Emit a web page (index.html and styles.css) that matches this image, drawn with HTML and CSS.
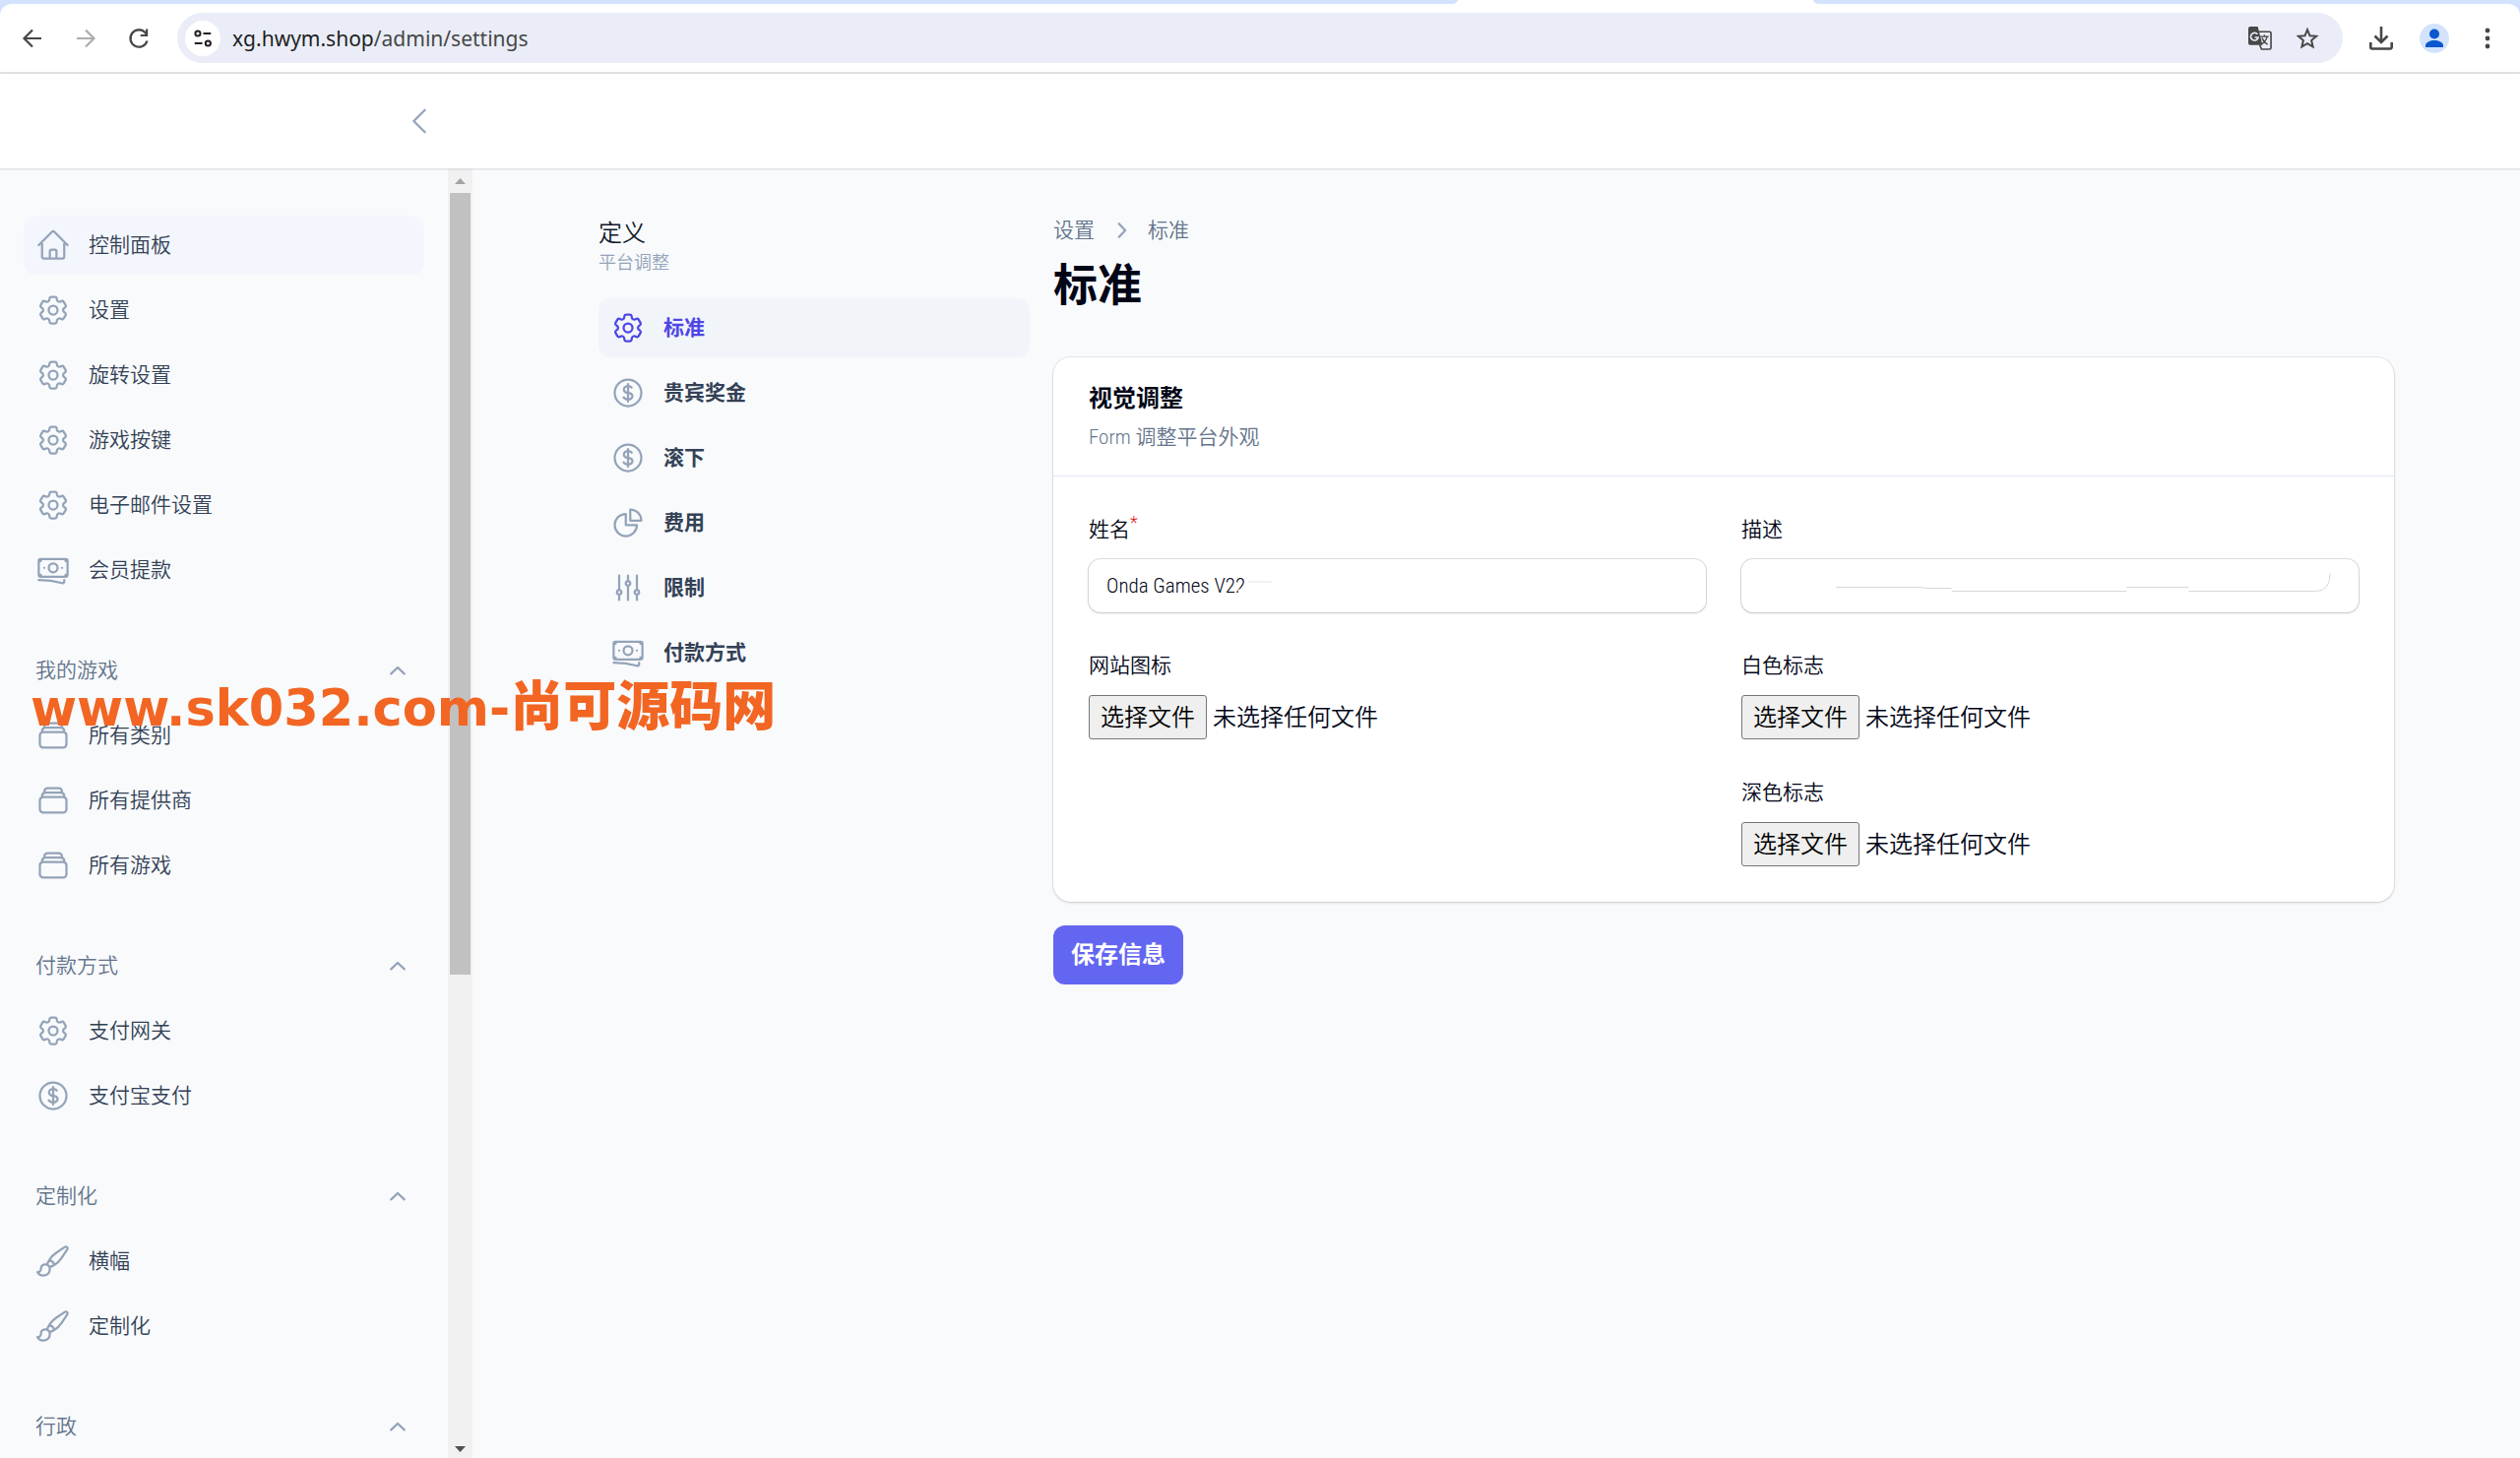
FILE: index.html
```html
<!DOCTYPE html>
<html lang="zh-CN">
<head>
<meta charset="utf-8">
<meta name="viewport" content="width=device-width, initial-scale=1">
<title>标准 - 设置</title>
<link rel="stylesheet" href="styles.css">
</head>
<body>
<svg class="sprite" aria-hidden="true">
  <symbol id="home" viewBox="0 0 24 24"><path d="M2.25 12l8.954-8.955c.44-.439 1.152-.439 1.591 0L21.75 12M4.5 9.75v10.125c0 .621.504 1.125 1.125 1.125H9.75v-4.875c0-.621.504-1.125 1.125-1.125h2.25c.621 0 1.125.504 1.125 1.125V21h4.125c.621 0 1.125-.504 1.125-1.125V9.75M8.25 21h8.25"/></symbol>
  <symbol id="cog" viewBox="0 0 24 24"><path d="M9.594 3.94c.09-.542.56-.94 1.11-.94h2.593c.55 0 1.02.398 1.11.94l.213 1.281c.063.374.313.686.645.87.074.04.147.083.22.127.324.196.72.257 1.075.124l1.217-.456a1.125 1.125 0 011.37.49l1.296 2.247a1.125 1.125 0 01-.26 1.431l-1.003.827c-.293.24-.438.613-.431.992a6.759 6.759 0 010 .255c-.007.378.138.75.43.99l1.005.828c.424.35.534.954.26 1.43l-1.298 2.247a1.125 1.125 0 01-1.369.491l-1.217-.456c-.355-.133-.75-.072-1.076.124a6.57 6.57 0 01-.22.128c-.331.183-.581.495-.644.869l-.213 1.28c-.09.543-.56.941-1.11.941h-2.594c-.55 0-1.02-.398-1.11-.94l-.213-1.281c-.062-.374-.312-.686-.644-.87a6.52 6.52 0 01-.22-.127c-.325-.196-.72-.257-1.076-.124l-1.217.456a1.125 1.125 0 01-1.369-.49l-1.297-2.247a1.125 1.125 0 01.26-1.431l1.004-.827c.292-.24.437-.613.43-.992a6.932 6.932 0 010-.255c.007-.378-.138-.75-.43-.99l-1.004-.828a1.125 1.125 0 01-.26-1.43l1.297-2.247a1.125 1.125 0 011.37-.491l1.216.456c.356.133.751.072 1.076-.124.072-.044.146-.087.22-.128.332-.183.582-.495.644-.869l.214-1.281z"/><path d="M15 12a3 3 0 11-6 0 3 3 0 016 0z"/></symbol>
  <symbol id="banknotes" viewBox="0 0 24 24"><path d="M2.25 18.75a60.07 60.07 0 0115.797 2.101c.727.198 1.453-.342 1.453-1.096V18.75M3.75 4.5v.75A.75.75 0 013 6h-.75m0 0v-.375c0-.621.504-1.125 1.125-1.125H20.25M2.25 6v9m18-10.5v.75c0 .414.336.75.75.75h.75m-1.5-1.5h.375c.621 0 1.125.504 1.125 1.125v9.75c0 .621-.504 1.125-1.125 1.125h-.375m1.5-1.5H21a.75.75 0 00-.75.75v.75m0 0H3.75m0 0h-.375a1.125 1.125 0 01-1.125-1.125V15m1.5 1.5v-.75A.75.75 0 003 15h-.75M15 10.5a3 3 0 11-6 0 3 3 0 016 0zm3 0h.008v.008H18V10.5zm-12 0h.008v.008H6V10.5z"/></symbol>
  <symbol id="dollar" viewBox="0 0 24 24"><path d="M12 6v12m-3-2.818l.879.659c1.171.879 3.07.879 4.242 0 1.172-.879 1.172-2.303 0-3.182C13.536 12.219 12.768 12 12 12c-.725 0-1.45-.22-2.003-.659-1.106-.879-1.106-2.303 0-3.182s2.9-.879 4.006 0l.415.33M21 12a9 9 0 11-18 0 9 9 0 0118 0z"/></symbol>
  <symbol id="pie" viewBox="0 0 24 24"><path d="M10.5 6a7.5 7.5 0 107.5 7.5h-7.5V6z"/><path d="M13.5 10.5H21A7.5 7.5 0 0013.5 3v7.5z"/></symbol>
  <symbol id="sliders" viewBox="0 0 24 24"><path d="M6 13.5V3.75m0 9.75a1.5 1.5 0 010 3m0-3a1.5 1.5 0 000 3m0 3.75V16.5m12-3V3.75m0 9.75a1.5 1.5 0 010 3m0-3a1.5 1.5 0 000 3m0 3.75V16.5m-6-9V3.75m0 3.75a1.5 1.5 0 010 3m0-3a1.5 1.5 0 000 3m0 9.75V10.5"/></symbol>
  <symbol id="stack" viewBox="0 0 24 24"><path d="M6 6.878V6a2.25 2.25 0 012.25-2.25h7.5A2.25 2.25 0 0118 6v.878m-12 0c.235-.083.487-.128.75-.128h10.5c.263 0 .515.045.75.128m-12 0A2.25 2.25 0 004.5 9v.878m13.5-3A2.25 2.25 0 0119.5 9v.878m0 0a2.246 2.246 0 00-.75-.128H5.25c-.263 0-.515.045-.75.128m15 0A2.25 2.25 0 0121 12v6a2.25 2.25 0 01-2.25 2.25H5.25A2.25 2.25 0 013 18v-6c0-.98.626-1.813 1.5-2.122"/></symbol>
  <symbol id="brush" viewBox="0 0 24 24"><path d="M9.53 16.122a3 3 0 00-5.78 1.128 2.25 2.25 0 01-2.4 2.245 4.5 4.5 0 008.4-2.245c0-.399-.078-.78-.22-1.128zm0 0a15.998 15.998 0 003.388-1.62m-5.043-.025a15.994 15.994 0 011.622-3.395m3.42 3.42a15.995 15.995 0 004.764-4.648l3.876-5.814a1.151 1.151 0 00-1.597-1.597L14.146 6.32a15.996 15.996 0 00-4.649 4.763m3.42 3.42a6.776 6.776 0 00-3.42-3.42"/></symbol>
  <symbol id="left" viewBox="0 0 24 24"><path d="M15.75 19.5L8.25 12l7.5-7.5"/></symbol>
  <symbol id="up" viewBox="0 0 20 20"><path d="M5.5 12.25L10 8l4.500 4.250"/></symbol>
</svg>

<header class="browser">
  <div class="tabs"><span class="tabs-left"></span><span class="tabs-active"></span><span class="tabs-right"></span></div>
  <div class="toolbar">
    <div class="history">
      <button class="tool" type="button" aria-label="后退"><svg viewBox="0 0 24 24"><path d="M21 12H4M12 3.500L3.500 12l8.500 8.500" fill="none" stroke="#474747" stroke-width="2.200"/></svg></button>
      <button class="tool" type="button" aria-label="前进"><svg viewBox="0 0 24 24"><path d="M3 12h17M12 3.500l8.500 8.500-8.500 8.500" fill="none" stroke="#adadad" stroke-width="2.200"/></svg></button>
      <button class="tool" type="button" aria-label="重新加载"><svg viewBox="0 0 24 24"><path d="M20.500 14.500A8.700 8.700 0 1 1 18.500 6l1.500 2" fill="none" stroke="#474747" stroke-width="2.300"/><path d="M21.200 2.500v7.500h-7.500v-2h5.300V2.500z" fill="#474747"/></svg></button>
    </div>
    <div class="omnibox">
      <button class="site" type="button" aria-label="网站信息"><svg viewBox="0 0 24 24" fill="none" stroke="#1f1f1f" stroke-width="2.200"><circle cx="6.500" cy="6.500" r="2.800"/><path d="M12.500 6.500H21M3 17.500h8.500"/><circle cx="17.800" cy="17.500" r="2.800"/></svg></button>
      <span class="url">xg.hwym.shop<span class="path">/admin/settings</span></span>
      <button class="tool" type="button" aria-label="翻译"><svg viewBox="0 0 25 25"><path d="M2 0h8l5 19.500H2a2 2 0 0 1-2-2V2a2 2 0 0 1 2-2z" fill="#474747"/><path d="M10.500 5.500h12a1.500 1.500 0 0 1 1.500 1.500v15.500a1.500 1.500 0 0 1-1.500 1.500h-8.500l-2-5" fill="none" stroke="#474747" stroke-width="1.700"/><path d="M9.800 8.200a4 4 0 1 0 .7 3.300H6.800" fill="none" stroke="#eaedf7" stroke-width="1.700"/><path d="M12.500 10.500h9M17 8.500v2M20 10.500c-1 4-3.500 6.500-6.500 8.500M14.500 12c1 3 3 5 6 7" fill="none" stroke="#474747" stroke-width="1.400"/></svg></button>
      <button class="tool" type="button" aria-label="收藏"><svg viewBox="0 0 24 24"><path d="M12 3.200l2.500 6.100 6.600.5-5 4.300 1.500 6.400-5.600-3.400-5.600 3.400 1.500-6.400-5-4.300 6.600-.5z" fill="none" stroke="#474747" stroke-width="2"/></svg></button>
    </div>
    <button class="tool" type="button" aria-label="下载"><svg viewBox="0 0 24 24"><path d="M12 0v15M5.500 9.500L12 16l6.500-6.500M1.300 16v5a1.500 1.500 0 0 0 1.500 1.500h18.400a1.500 1.500 0 0 0 1.500-1.500v-5" fill="none" stroke="#474747" stroke-width="2.600"/></svg></button>
    <button class="avatar" type="button" aria-label="用户"><svg viewBox="0 0 30 30"><circle cx="15" cy="10.500" r="5" fill="#0b57d0"/><path d="M6 24v-2c0-3 5-5 9-5s9 2 9 5v2z" fill="#0b57d0"/></svg></button>
    <button class="tool" type="button" aria-label="菜单"><svg viewBox="0 0 24 24" fill="#474747"><circle cx="12" cy="4" r="2.400"/><circle cx="12" cy="12" r="2.400"/><circle cx="12" cy="20" r="2.400"/></svg></button>
  </div>
</header>

<div class="topbar"><button class="collapse" type="button" aria-label="收起侧栏"><svg class="icon"><use href="#left"/></svg></button></div>

<div class="shell">
  <nav class="sidebar" aria-label="主导航">
    <div class="group">
      <a class="item current" href="#"><svg class="icon"><use href="#home"/></svg>控制面板</a>
      <a class="item" href="#"><svg class="icon"><use href="#cog"/></svg>设置</a>
      <a class="item" href="#"><svg class="icon"><use href="#cog"/></svg>旋转设置</a>
      <a class="item" href="#"><svg class="icon"><use href="#cog"/></svg>游戏按键</a>
      <a class="item" href="#"><svg class="icon"><use href="#cog"/></svg>电子邮件设置</a>
      <a class="item" href="#"><svg class="icon"><use href="#banknotes"/></svg>会员提款</a>
    </div>
    <div class="group">
      <button class="group-head" type="button">我的游戏<svg class="icon small"><use href="#up"/></svg></button>
      <a class="item" href="#"><svg class="icon"><use href="#stack"/></svg>所有类别</a>
      <a class="item" href="#"><svg class="icon"><use href="#stack"/></svg>所有提供商</a>
      <a class="item" href="#"><svg class="icon"><use href="#stack"/></svg>所有游戏</a>
    </div>
    <div class="group">
      <button class="group-head" type="button">付款方式<svg class="icon small"><use href="#up"/></svg></button>
      <a class="item" href="#"><svg class="icon"><use href="#cog"/></svg>支付网关</a>
      <a class="item" href="#"><svg class="icon"><use href="#dollar"/></svg>支付宝支付</a>
    </div>
    <div class="group">
      <button class="group-head" type="button">定制化<svg class="icon small"><use href="#up"/></svg></button>
      <a class="item" href="#"><svg class="icon"><use href="#brush"/></svg>横幅</a>
      <a class="item" href="#"><svg class="icon"><use href="#brush"/></svg>定制化</a>
    </div>
    <div class="group">
      <button class="group-head" type="button">行政<svg class="icon small"><use href="#up"/></svg></button>
    </div>
  </nav>
  <div class="scrollbar" aria-hidden="true">
    <svg viewBox="0 0 25 25"><path d="M7 16l5.500-6 5.500 6z" fill="#a3a3a3"/></svg>
    <div class="track"><div class="thumb"></div></div>
    <svg viewBox="0 0 25 25"><path d="M7 13l5.500 6 5.500-6z" fill="#505050"/></svg>
  </div>

  <main class="main">
    <div class="content">
      <aside class="subnav">
        <h2 class="subnav-title">定义</h2>
        <p class="subnav-note">平台调整</p>
        <nav class="subnav-list" aria-label="设置">
          <a class="item active" href="#"><svg class="icon"><use href="#cog"/></svg>标准</a>
          <a class="item" href="#"><svg class="icon"><use href="#dollar"/></svg>贵宾奖金</a>
          <a class="item" href="#"><svg class="icon"><use href="#dollar"/></svg>滚下</a>
          <a class="item" href="#"><svg class="icon"><use href="#pie"/></svg>费用</a>
          <a class="item" href="#"><svg class="icon"><use href="#sliders"/></svg>限制</a>
          <a class="item" href="#"><svg class="icon"><use href="#banknotes"/></svg>付款方式</a>
        </nav>
      </aside>
      <section class="page">
        <nav class="crumbs" aria-label="面包屑"><a href="#">设置</a><svg class="icon small" viewBox="0 0 20 20"><path d="M8.500 5.500l4.250 4.500-4.250 4.500"/></svg><a href="#">标准</a></nav>
        <h1 class="page-title">标准</h1>
        <form class="form">
          <div class="card">
            <header class="card-head">
              <h3 class="card-title">视觉调整</h3>
              <p class="card-note">Form 调整平台外观</p>
            </header>
            <div class="fields">
              <div class="field">
                <label for="name">姓名<sup class="required">*</sup></label>
                <div class="control">
                  <input class="text" id="name" type="text" value="Onda Games V22">
                  <svg class="marks" viewBox="0 0 628 54" preserveAspectRatio="xMinYMid" aria-hidden="true"><path d="M152 31l12-4v12h-12z" fill="#fff"/><path d="M162 23h24" stroke="#e6e6e6" fill="none"/></svg>
                </div>
              </div>
              <div class="field">
                <label for="description">描述</label>
                <div class="control">
                  <input class="text" id="description" type="text">
                  <svg class="marks" viewBox="0 0 628 54" preserveAspectRatio="xMaxYMid" aria-hidden="true"><path d="M96 28.500h89M185 29.500h29M214 32.500h178M392 28.500h63M455 32.500h130q14 0 14-18" stroke="#d8d8d8" fill="none"/></svg>
                </div>
              </div>
              <div class="field">
                <label for="favicon">网站图标</label>
                <div class="file"><button class="choose" type="button" tabindex="-1">选择文件</button><span>未选择任何文件</span><input id="favicon" type="file"></div>
              </div>
              <div class="field">
                <label for="logo-white">白色标志</label>
                <div class="file"><button class="choose" type="button" tabindex="-1">选择文件</button><span>未选择任何文件</span><input id="logo-white" type="file"></div>
              </div>
              <div class="field second">
                <label for="logo-dark">深色标志</label>
                <div class="file"><button class="choose" type="button" tabindex="-1">选择文件</button><span>未选择任何文件</span><input id="logo-dark" type="file"></div>
              </div>
            </div>
          </div>
          <button class="save" type="submit">保存信息</button>
        </form>
      </section>
    </div>
  </main>
</div>
<div class="watermark">www.sk032.com-<span class="watermark-name">尚可源码网</span></div>
</body>
</html>
```
FILE: styles.css
```css
* { box-sizing: border-box; margin: 0; padding: 0; }

body {
  display: flex;
  flex-direction: column;
  height: 100vh;
  overflow: hidden;
  background: #f8fafc;
  color: #020617;
  font-family: "Roboto Condensed", Roboto, "Noto Sans CJK SC", sans-serif;
  font-size: 21px;
  font-weight: 350;
  line-height: 30px;
}

a { color: inherit; text-decoration: none; }
button, input { font: inherit; color: inherit; border: 0; background: none; }
.sprite { position: absolute; width: 0; height: 0; }

.icon {
  flex: none;
  width: 36px;
  height: 36px;
  fill: none;
  stroke: #94a3b8;
  stroke-width: 1.5;
  stroke-linecap: round;
  stroke-linejoin: round;
}
.icon.small { width: 30px; height: 30px; }

/* browser frame */
.browser { flex: none; background: #d3e3fd; border-bottom: 2px solid #dfe0e0; }
.tabs { display: flex; height: 4px; background: #fff; }
.tabs-left, .tabs-right { background: #d3e3fd; }
.tabs-left { flex: 1481; border-bottom-right-radius: 6px 4px; }
.tabs-active { flex: 361; }
.tabs-right { flex: 718; border-bottom-left-radius: 6px 4px; }
.toolbar {
  display: flex;
  align-items: center;
  gap: 27px;
  height: 69px;
  padding: 0 21px;
  background: #fff;
  border-radius: 12px 12px 0 0;
}
.history { display: flex; gap: 30px; }
.tool { display: flex; flex: none; width: 24px; height: 24px; }
.tool svg { width: 24px; height: 24px; }
.omnibox {
  display: flex;
  flex: 1;
  align-items: center;
  gap: 24px;
  height: 51px;
  padding: 0 24px 0 8px;
  background: #eaedf7;
  border-radius: 26px;
}
.site {
  display: flex;
  align-items: center;
  justify-content: center;
  width: 36px;
  height: 36px;
  margin-right: -12px;
  background: #fff;
  border-radius: 50%;
}
.site svg { width: 22px; height: 22px; }
.url { flex: 1; font-family: "Noto Sans", "Open Sans", sans-serif; font-size: 21px; font-weight: 400; color: #1f1f1f; }
.path { color: #474747; }
.avatar { display: flex; width: 30px; height: 30px; background: #d3e3fd; border-radius: 50%; }

.topbar {
  display: flex;
  flex: none;
  align-items: center;
  width: 100%;
  height: 96px;
  padding-left: 408px;
  background: #fff;
  box-shadow: 0 1px 2px #0f172a22;
  z-index: 1;
}
.collapse { display: flex; }

/* main sidebar */
.shell { display: flex; flex: 1; min-height: 0; }
.sidebar {
  display: flex;
  flex: none;
  flex-direction: column;
  gap: 42px;
  width: 455px;
  padding: 48px 24px;
  overflow: hidden;
}
.group { display: flex; flex-direction: column; gap: 6px; }
.item {
  display: flex;
  align-items: center;
  gap: 18px;
  height: 60px;
  padding: 0 12px;
  border-radius: 12px;
  color: #334155;
}
.item.current { background: #f3f6fc; }
.group-head {
  display: flex;
  align-items: center;
  justify-content: space-between;
  height: 60px;
  padding: 0 12px;
  color: #64748b;
}
.scrollbar { display: flex; flex: none; flex-direction: column; width: 25px; background: #f1f1f1; }
.scrollbar svg { flex: none; height: 25px; }
.track { flex: 1; padding: 0 2px; }
.thumb { height: 63%; background: #c1c1c1; }

/* settings page */
.main { flex: 1; padding: 48px 24px; }
.content {
  display: grid;
  grid-template-columns: repeat(12, minmax(0, 1fr));
  gap: 24px;
  max-width: 1824px;
  margin: 0 auto;
}
.subnav { grid-column: span 3; }
.page { grid-column: span 9; }
.subnav-title { font-size: 24px; font-weight: 350; line-height: 36px; color: #0f172a; }
.subnav-note { font-size: 18px; line-height: 24px; color: #94a3b8; }
.subnav-list { display: flex; flex-direction: column; gap: 6px; margin-top: 24px; font-weight: 700; }
.item.active { background: #f1f5f9; color: #4f46e5; }
.item.active .icon { stroke: #4f46e5; }

.crumbs { display: flex; align-items: center; gap: 12px; height: 30px; color: #64748b; }
.page-title { margin: 15px 0 45px; font-size: 45px; font-weight: 700; line-height: 54px; }
.card { background: #fff; border-radius: 18px; box-shadow: 0 0 0 1px #0206170f, 0 1px 3px #02061726; }
.card-head { padding: 24px 36px; border-bottom: 1px solid #e2e8f0; }
.card-title { font-size: 24px; font-weight: 700; line-height: 36px; }
.card-note { margin-top: 6px; line-height: 30px; color: #64748b; }
.fields { display: grid; grid-template-columns: 1fr 1fr; gap: 36px; padding: 36px; }
.field { display: flex; flex-direction: column; gap: 12px; }
.field.second { grid-column: 2; }
.field label { line-height: 36px; }
.required { font-size: 18px; line-height: 0; color: #dc2626; }
.control { position: relative; height: 54px; }
.text {
  width: 100%;
  height: 54px;
  padding: 0 18px;
  background: #fff;
  border-radius: 12px;
  box-shadow: 0 0 0 1px #02061720, 0 1px 3px #02061720;
}
.marks { position: absolute; inset: 0; width: 100%; height: 100%; pointer-events: none; }
.file { position: relative; display: flex; align-items: center; gap: 6px; height: 45px; font-size: 24px; }
.file input { position: absolute; inset: 0; opacity: 0; }
.choose { height: 45px; padding: 0 11px; background: #efefef; border: 1px solid #767676; border-radius: 3px; color: #000; }
.save {
  height: 60px;
  margin-top: 24px;
  padding: 0 18px;
  background: #6366f1;
  border-radius: 12px;
  color: #fff;
  font-size: 24px;
  font-weight: 700;
}

.watermark {
  position: absolute;
  top: 686px;
  left: 31px;
  z-index: 2;
  font-family: "DejaVu Sans", "Noto Sans CJK SC", sans-serif;
  font-size: 51px;
  font-weight: 900;
  line-height: 66px;
  white-space: nowrap;
  color: #f26522;
}
.watermark-name { font-size: 54px; }
```
